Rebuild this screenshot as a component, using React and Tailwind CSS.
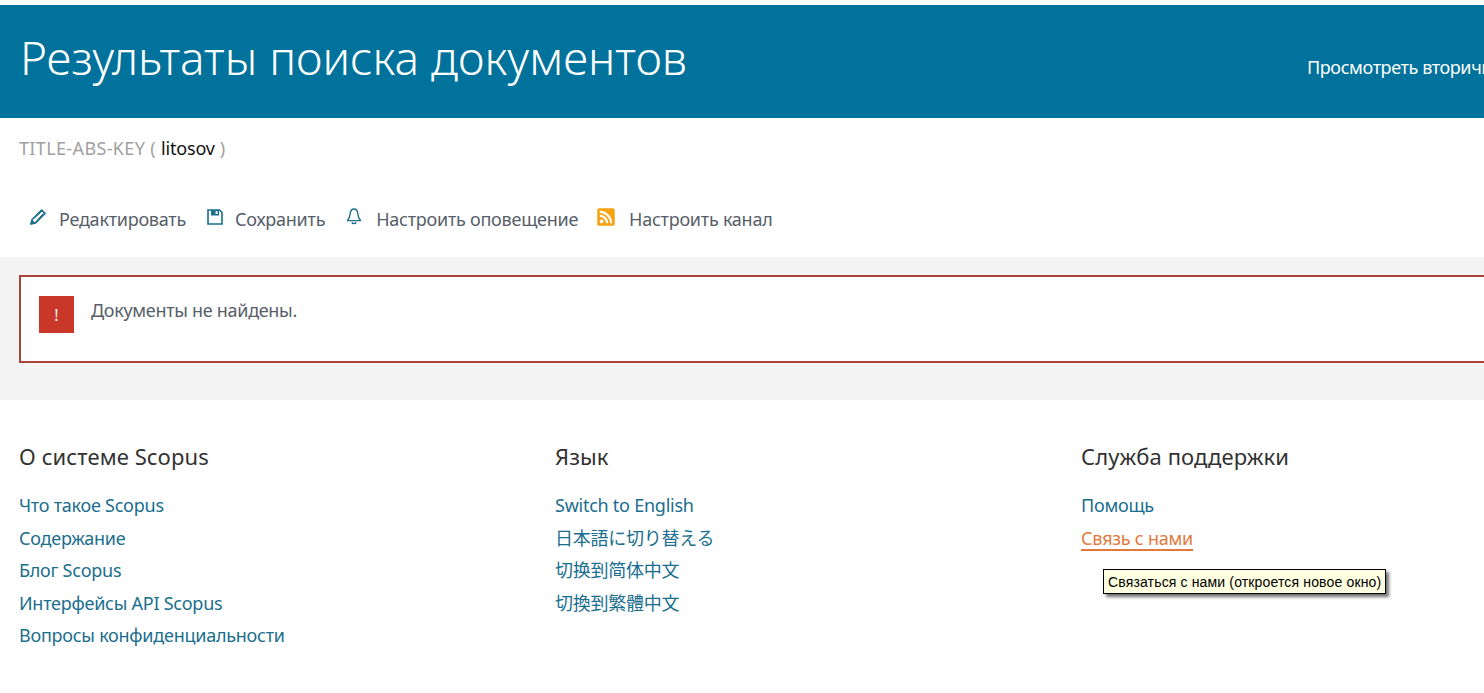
import React from 'react';
import { FaRssSquare } from 'react-icons/fa';

const sans = "font-['Noto_Sans',sans-serif]";
const cjk = "font-['Noto_Sans','Noto_Sans_CJK_JP',sans-serif]";

function PencilIcon() {
  return (
    <svg viewBox="0 0 16 16" className="h-[16px] w-[16px] text-[#1a6e8e]" fill="none" stroke="currentColor">
      <path d="M11.6 1 L15 4.4 L5.6 13.9 L1 15 L2.1 10.5 Z" strokeWidth="1.6" strokeLinejoin="round" />
      <path d="M4.2 9.2 L11.2 3 M6.8 11.8 L13 4.8" strokeWidth="1" />
      <path d="M0.4 15.6 L1.8 10.4 L5.6 14.2 Z" fill="currentColor" stroke="none" />
    </svg>
  );
}

function SaveIcon() {
  return (
    <svg viewBox="0 0 16 16" className="h-[16px] w-[16px] text-[#1a6e8e]" fill="none" stroke="currentColor">
      <path d="M1 1 H12.5 L15 3.5 V15 H1 Z" strokeWidth="1.6" />
      <path d="M4 1 H12 V6.5 H4 Z" fill="currentColor" stroke="none" />
      <path d="M8.6 2.2 H10.6 V5 H8.6 Z" fill="#fff" stroke="none" />
    </svg>
  );
}

function BellIcon() {
  return (
    <svg viewBox="0 0 16 17" className="h-[17px] w-[16px] text-[#1a6e8e]" fill="none" stroke="currentColor" strokeWidth="1.4">
      <path d="M8 1 C5 1 4.4 3.2 4.2 5.5 C4 8.5 3.2 10.6 1.4 12.6 H14.6 C12.8 10.6 12 8.5 11.8 5.5 C11.6 3.2 11 1 8 1 Z" strokeLinejoin="round" />
      <path d="M5.8 14.4 C6.6 16 9.4 16 10.2 14.4" />
    </svg>
  );
}

function Action({ icon, label, gap, className = '' }) {
  return (
    <a className={`flex items-start text-[18px] leading-[24px] text-[#565e68] tracking-[-0.25px] ${className}`}>
      <span className="flex h-[21px] items-center">{icon}</span>
      <span className={`${gap} mt-[1px]`}>{label}</span>
    </a>
  );
}

function FooterCol({ title, links, className = '' }) {
  return (
    <div className={className}>
      <h3 className="text-[22px] leading-[28px] text-[#323232] tracking-[0.1px]">{title}</h3>
      <ul className="mt-[19px] flex flex-col text-[18px] leading-[32.5px] text-[#1a6e8e] tracking-[-0.25px]">
        {links.map((l) => (
          <li key={l}>{l}</li>
        ))}
      </ul>
    </div>
  );
}

export default function App() {
  return (
    <div className={`${sans} relative h-[693px] w-[1484px] overflow-hidden bg-white pt-[5px]`}>
      <header className="flex h-[113px] items-start justify-between bg-[#00729b] pl-[20px] text-white">
        <h1 className="mt-[22px] whitespace-nowrap text-[46px] leading-[60px] font-light">
          Результаты поиска документов
        </h1>
        <a className="mt-[49px] w-[177px] shrink-0 overflow-hidden whitespace-nowrap text-[18px] leading-[26px] tracking-[-0.4px]">
          Просмотреть вторичные документы
        </a>
      </header>

      <p className="mt-[17px] pl-[19px] text-[18px] leading-[26px] tracking-[0.36px] text-[#a0a0a0]">
        TITLE-ABS-KEY ( <span className="tracking-[-0.2px] text-[#111]">litosov</span> )
      </p>

      <nav className="mt-[45px] flex h-[51px] items-start pl-[30px]">
        <Action icon={<PencilIcon />} label="Редактировать" gap="ml-[13px]" />
        <Action icon={<SaveIcon />} label="Сохранить" gap="ml-[12px]" className="ml-[21px]" />
        <Action icon={<BellIcon />} label="Настроить оповещение" gap="ml-[14px]" className="ml-[21px]" />
        <Action icon={<FaRssSquare className="h-[20px] w-[20px] text-[#f5a312]" />} label="Настроить канал" gap="ml-[13px]" className="ml-[18px]" />
      </nav>

      <section className="h-[143px] bg-[#f4f4f4] pt-[18px] pl-[19px]">
        <div className="flex h-[88px] w-[1480px] items-start border-2 border-[#a8443c] bg-white pt-[19px] pl-[18px]">
          <span className="flex h-[37px] w-[35px] items-center justify-center bg-[#c83727] text-[16px] text-white">!</span>
          <p className="ml-[17px] mt-[1px] text-[18px] leading-[26px] tracking-[-0.3px] text-[#565e68]">Документы не найдены.</p>
        </div>
      </section>

      <footer className="flex pt-[42px] pl-[19px]">
        <FooterCol
          className="w-[536px]"
          title="О системе Scopus"
          links={['Что такое Scopus', 'Содержание', 'Блог Scopus', 'Интерфейсы API Scopus', 'Вопросы конфиденциальности']}
        />
        <FooterCol
          className={`w-[526px] ${cjk}`}
          title="Язык"
          links={['Switch to English', '日本語に切り替える', '切换到简体中文', '切換到繁體中文']}
        />
        <div>
          <h3 className="text-[22px] leading-[28px] tracking-[0.1px] text-[#323232]">Служба поддержки</h3>
          <ul className="mt-[19px] text-[18px] leading-[32.5px] tracking-[-0.25px]">
            <li className="text-[#1a6e8e]">Помощь</li>
            <li className="w-fit">
              <span className="block h-[29px] border-b-2 border-[#e2793a] text-[#e2793a]">Связь с нами</span>
            </li>
          </ul>
        </div>
      </footer>

      <div className="absolute top-[569px] left-[1103px] border border-black bg-[#ffffe1] px-[4px] pt-[1px] font-['Liberation_Sans',sans-serif] text-[14px] leading-[22px] tracking-[0.15px] whitespace-nowrap text-black shadow-[3px_3px_3px_rgba(0,0,0,0.55)]">
        Связаться с нами (откроется новое окно)
      </div>
    </div>
  );
}
